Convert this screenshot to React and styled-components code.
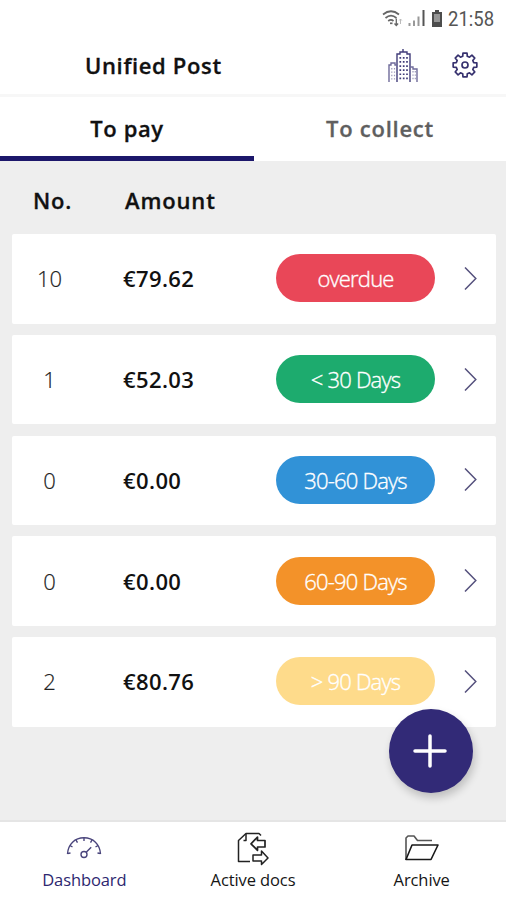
import React from "react";
import styled, { createGlobalStyle } from "styled-components";

const GlobalStyle = createGlobalStyle`
  * { box-sizing: border-box; }
  body { margin: 0; background: #fff; font-family: "Open Sans", "Noto Sans", sans-serif; }
`;

const Screen = styled.div`
  position: relative;
  display: flex;
  flex-direction: column;
  width: 506px;
  height: 900px;
  overflow: hidden;
  background: #fff;
  color: #111;
`;

const StatusBar = styled.div`
  display: flex;
  align-items: center;
  justify-content: flex-end;
  gap: 5px;
  height: 36px;
  padding-right: 11px;
`;

const Clock = styled.span`
  width: 47px;
  font: 400 18.5px/22px Roboto, sans-serif;
  color: #555;
  white-space: nowrap;
  transform: translateY(1px) scaleY(1.12);
`;

const Header = styled.header`
  display: flex;
  align-items: center;
  height: 61px;
  padding: 0 28.5px 0 85px;
  border-bottom: 3px solid #f7f7f7;
`;

const Title = styled.h1`
  flex: 1;
  margin: 0;
  font-size: 22px;
  line-height: 30px;
  font-weight: 600;
  letter-spacing: 0.65px;
  -webkit-text-stroke: 0.3px currentColor;
`;

const GearSlot = styled.div`
  display: flex;
  margin-left: 33px;
`;

const Tabs = styled.nav`
  display: flex;
  height: 64px;
`;

const Tab = styled.div`
  width: ${(p) => (p.$active ? 254 : 252)}px;
  height: ${(p) => (p.$active ? 63.5 : 64)}px;
  line-height: 63px;
  text-align: center;
  font-size: 22px;
  font-weight: 600;
  letter-spacing: ${(p) => (p.$active ? 0.6 : 0.75)}px;
  -webkit-text-stroke: 0.3px currentColor;
  color: ${(p) => (p.$active ? "#111" : "#5f5f5f")};
  box-shadow: ${(p) => (p.$active ? "inset 0 -5px 0 #1c176b" : "none")};
`;

const Content = styled.main`
  flex: 1;
  padding: 0 10.5px 0 11.5px;
  background: #eee;
`;

const ColumnHeads = styled.div`
  display: flex;
  height: 73px;
  padding-left: 21.5px;
  line-height: 79px;
  font-size: 22px;
  font-weight: 600;
  letter-spacing: 0.85px;
  -webkit-text-stroke: 0.3px currentColor;
`;

const NumberHead = styled.span`
  width: 92px;
`;

const List = styled.div`
  display: flex;
  flex-direction: column;
  gap: 11.25px;
`;

const Row = styled.div`
  display: flex;
  align-items: center;
  height: 89.5px;
  padding-right: 19px;
  background: #fff;
  border-radius: 2px;
`;

const Count = styled.span`
  width: 76px;
  margin-top: -1px;
  text-align: center;
  font-size: 22px;
  font-weight: 300;
  line-height: 30px;
  color: #222;
  -webkit-text-stroke: 0.2px currentColor;
`;

const Amount = styled.span`
  flex: 1;
  margin-top: -1px;
  padding-left: 35.5px;
  font-size: 22px;
  font-weight: 600;
  line-height: 30px;
  letter-spacing: 0.4px;
`;

const Pill = styled.span`
  width: 159px;
  height: 48px;
  margin: -1px 28.5px 0 0;
  border-radius: 24px;
  background: ${(p) => p.$color};
  color: #fff;
  text-align: center;
  font-size: 22px;
  line-height: 48px;
  font-weight: 300;
  letter-spacing: -0.8px;
  -webkit-text-stroke: 0.35px currentColor;
`;

const Fab = styled.button`
  position: absolute;
  left: 389px;
  top: 709px;
  display: flex;
  align-items: center;
  justify-content: center;
  width: 84px;
  height: 84px;
  padding: 0 2px 0 0;
  border: 0;
  border-radius: 50%;
  background: #322a77;
  box-shadow: 2px 5px 8px rgba(0, 0, 0, 0.2);
`;

const BottomNav = styled.nav`
  display: flex;
  height: 80px;
  border-top: 2px solid #e5e5e5;
`;

const NavItem = styled.div`
  display: flex;
  flex: 1;
  flex-direction: column;
  align-items: center;
  padding-top: 10px;
  color: ${(p) => (p.$active ? "#2d276f" : "#151515")};
  font-size: 16.5px;
  line-height: 22px;
  font-weight: 400;
  letter-spacing: -0.1px;
`;

const NavIcon = styled.div`
  height: 37px;
`;

const WifiIcon = () => (
  <svg width="21" height="17" viewBox="0 0 21 17" fill="none" stroke="#666" strokeWidth="1.7">
    <path d="M1 4.5Q9 -2 17 4.5M3.5 8Q9 3.3 14.5 8M6.2 11Q9 8.8 11.5 11" />
    <path d="M8 13.3h2.5" />
    <path d="M14.3 8.5v7M12.5 13.5l1.8 2 1.8-2" strokeWidth="1.3" />
    <path d="M18.5 14V9M17.2 10.5l1.3-1.5 1.3 1.5" stroke="#bbb" strokeWidth="1" />
  </svg>
);

const SignalIcon = () => (
  <svg width="18" height="18" viewBox="0 0 18 18" stroke="#666" strokeWidth="2">
    <path d="M1.5 14v3M6 11.5V17M10.5 7.5V17" stroke="#999" />
    <path d="M15.5 1v16" stroke="#555" />
  </svg>
);

const BatteryIcon = () => (
  <svg width="12" height="17" viewBox="0 0 12 17">
    <path d="M4 0h4v2h3v15H1V2h3z" fill="#4d4d4d" />
    <path d="M3 4h6v8H3z" fill="#969696" />
  </svg>
);

const CityIcon = () => (
  <svg width="31" height="35" viewBox="0 0 31 35" fill="none" stroke="#413c79" strokeWidth="1.4">
    <path d="M9 34V6h3V4h3V1v3h4v2h3v28" />
    <path d="M1 34V17h2v-2h4v2h2M22 19h3v2h4v13" stroke="#6f6b9a" />
    <path
      d="M12.3 9v24M15.7 9v24M19 9v24"
      strokeWidth="1.7"
      strokeDasharray="1.7 2.4"
    />
    <path d="M3.8 20v13M6.5 20v13M25 23v10M27.3 23v10" stroke="#9a97b8" strokeWidth="1.2" strokeDasharray="1.4 2" />
  </svg>
);

const GEAR_PATH = (() => {
  const points = [];
  for (let i = 0; i < 8; i += 1) {
    [[-0.26, 9], [-0.17, 12], [0.17, 12], [0.26, 9]].forEach(([offset, radius]) => {
      const angle = (i * Math.PI) / 4 + offset;
      points.push(`${(13 + radius * Math.cos(angle)).toFixed(2)} ${(13 + radius * Math.sin(angle)).toFixed(2)}`);
    });
  }
  return `M${points.join("L")}Z`;
})();

const GearIcon = () => (
  <svg width="26" height="26" viewBox="0 0 26 26" fill="none" stroke="#37326f" strokeWidth="1.7" strokeLinejoin="round">
    <path d={GEAR_PATH} />
    <circle cx="13" cy="13" r="3" />
  </svg>
);

const Chevron = () => (
  <svg width="13" height="24" viewBox="0 0 13 24" fill="none" stroke="#55517d" strokeWidth="1.5">
    <path d="M1 .5l10.800 11L1 22.500" />
  </svg>
);

const PlusIcon = () => (
  <svg width="34" height="34" viewBox="0 0 34 34" stroke="#fff" strokeWidth="3.5" strokeLinecap="round">
    <path d="M17 2v30M2 17h30" />
  </svg>
);

const GaugeIcon = () => (
  <svg width="36" height="28" viewBox="0 -4 36 28" fill="none" stroke="#4a457c" strokeWidth="1.4">
    <path d="M1.5 18C2 8 9 1.8 18 1.8S34 8 34.500 18" />
    <path d="M1.500 17.500l3-.5M4 9.500l2.500 1.500M10 4l1.500 2.700M18 2v3M26 4l-1.500 2.700M32 9.500l-2.500 1.500M34.500 17.500l-3-.5" />
    <circle cx="18" cy="18.500" r="3" />
    <path d="M20.200 16.200l5-5" />
  </svg>
);

const DocsIcon = () => (
  <svg width="32" height="34" viewBox="0 0 32 34" fill="none" stroke="#222" strokeWidth="1.500" strokeLinejoin="round">
    <path d="M24 3.500L22 1.500H9L1.500 8.500V29.500H13" />
    <path d="M9 2v6.500H6.500" />
    <path d="M28 8.500h-7.500V5L14 11.800l6.500 6.500V15H28z" strokeWidth="1.700" />
    <path d="M16 23h8.500v-4L31 26l-6.500 6.500V29H16z" />
  </svg>
);

const FolderIcon = () => (
  <svg width="36" height="30" viewBox="0 -3 36 30" fill="none" stroke="#181818" strokeWidth="1.600" strokeLinejoin="round">
    <path d="M2 25V3l2-2h6l3.500 4.500H28" stroke="#555" />
    <path d="M2 24.500L8 10h26l-7 14.500z" />
  </svg>
);

const BUCKETS = [
  { count: "10", amount: "€79.62", label: "overdue", color: "#e94758" },
  { count: "1", amount: "€52.03", label: "< 30 Days", color: "#1dab6e" },
  { count: "0", amount: "€0.00", label: "30-60 Days", color: "#3192d7" },
  { count: "0", amount: "€0.00", label: "60-90 Days", color: "#f39229" },
  { count: "2", amount: "€80.76", label: "> 90 Days", color: "#fedb8b" },
];

export default function App() {
  return (
    <Screen>
      <GlobalStyle />
      <StatusBar>
        <WifiIcon />
        <SignalIcon />
        <BatteryIcon />
        <Clock>21:58</Clock>
      </StatusBar>
      <Header>
        <Title>Unified Post</Title>
        <CityIcon />
        <GearSlot>
          <GearIcon />
        </GearSlot>
      </Header>
      <Tabs>
        <Tab $active>To pay</Tab>
        <Tab>To collect</Tab>
      </Tabs>
      <Content>
        <ColumnHeads>
          <NumberHead>No.</NumberHead>
          <span>Amount</span>
        </ColumnHeads>
        <List>
          {BUCKETS.map((bucket) => (
            <Row key={bucket.label}>
              <Count>{bucket.count}</Count>
              <Amount>{bucket.amount}</Amount>
              <Pill $color={bucket.color}>{bucket.label}</Pill>
              <Chevron />
            </Row>
          ))}
        </List>
      </Content>
      <BottomNav>
        <NavItem $active>
          <NavIcon><GaugeIcon /></NavIcon>
          Dashboard
        </NavItem>
        <NavItem>
          <NavIcon><DocsIcon /></NavIcon>
          Active docs
        </NavItem>
        <NavItem>
          <NavIcon><FolderIcon /></NavIcon>
          Archive
        </NavItem>
      </BottomNav>
      <Fab aria-label="Add">
        <PlusIcon />
      </Fab>
    </Screen>
  );
}
